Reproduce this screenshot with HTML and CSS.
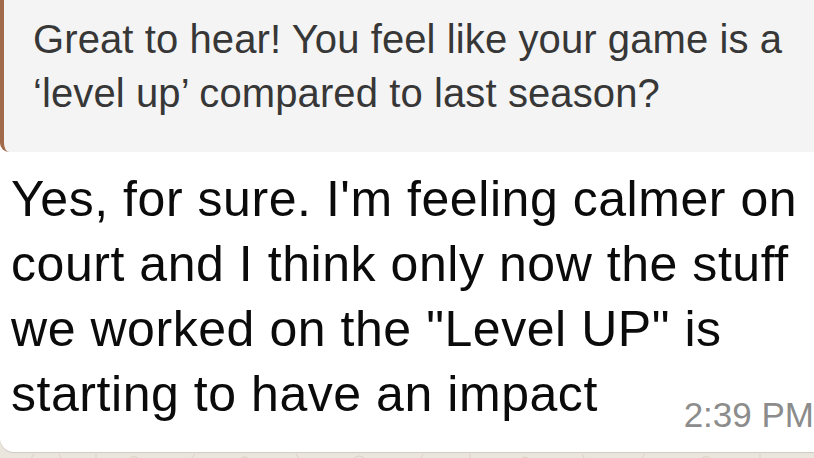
FILE: index.html
```html
<!DOCTYPE html>
<html lang="en">
<head>
<meta charset="utf-8">
<title>Message</title>
<link rel="stylesheet" href="styles.css">
</head>
<body>
<div class="chat">
  <div class="bubble">
    <div class="quote">
      <p class="quote-text">Great to hear! You feel like your game is a<br>‘level up’ compared to last season?</p>
    </div>
    <div class="content">
      <p class="message">Yes, for sure. I'm feeling calmer on<br>court and I think only now the stuff<br>we worked on the "Level UP" is<br>starting to have an impact</p>
      <div class="meta"><span class="time">2:39 PM</span></div>
    </div>
  </div>
  <svg class="wallpaper" width="814" height="8" viewBox="0 0 814 8" aria-hidden="true">
    <g fill="none" stroke="#d9d1c4" stroke-width="1">
      <path d="M30 8 l4 -6"/><path d="M62 8 l-3 -6"/><path d="M96 8 v-6"/>
      <path d="M128 8 q6 -7 12 0"/><path d="M190 8 l5 -6"/><path d="M240 8 q4 -6 9 -1"/>
      <path d="M300 8 l-4 -6"/><path d="M352 8 q8 -8 14 0"/><path d="M420 8 l3 -6"/>
      <path d="M470 8 v-6"/><path d="M520 8 q5 -6 10 0"/><path d="M585 8 l-3 -6"/>
      <path d="M640 8 l5 -6"/><path d="M700 8 q6 -7 12 0"/><path d="M760 8 v-6"/>
    </g>
  </svg>
</div>
</body>
</html>
```

FILE: styles.css
```css
html, body {
  margin: 0;
  padding: 0;
}

body {
  width: 814px;
  height: 458px;
  overflow: hidden;
  background: #ebe6dd;
  font-family: "Liberation Sans", Arial, sans-serif;
}

.chat {
  display: flex;
  flex-direction: column;
  width: 814px;
}

.bubble {
  background: #ffffff;
  margin-right: -20px;
  border-radius: 0 0 0 14px;
  padding-bottom: 17px;
  box-shadow: 0 1px 1px rgba(0, 0, 0, 0.12);
}

.quote {
  background: #f4f4f4;
  border-left: 4px solid #a06a4b;
  border-radius: 0 0 0 9px;
  padding: 12px 0 32px 29px;
}

.quote-text {
  margin: 0;
  font-size: 40px;
  line-height: 54px;
  letter-spacing: 0.1px;
  color: #373737;
  white-space: nowrap;
}

.content {
  padding: 15px 0 0 11px;
  display: flex;
  flex-direction: column;
}

.message {
  margin: 0;
  font-size: 50px;
  line-height: 65px;
  letter-spacing: 0.55px;
  color: #0b0b0b;
  white-space: nowrap;
}

.meta {
  display: flex;
  justify-content: flex-end;
  margin-top: -32px;
  padding-right: 20px;
}

.time {
  font-size: 35px;
  line-height: 40px;
  color: #8c8c8c;
  white-space: nowrap;
}

.wallpaper {
  display: block;
}
```
